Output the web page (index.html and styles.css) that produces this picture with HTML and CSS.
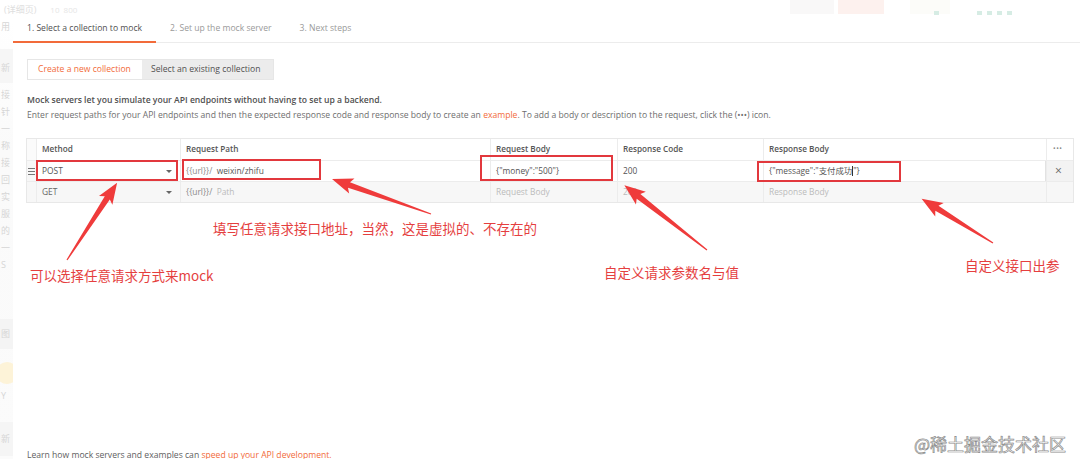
FILE: index.html
```html
<!DOCTYPE html>
<html lang="zh-CN">
<head>
<meta charset="utf-8">
<title>Mock server</title>
<link rel="stylesheet" href="styles.css">
</head>
<body>
<div class="page">
  <div class="top">
    <div class="top-left"><span class="faint">(详细页)</span><span class="faint small">10 &nbsp;800</span></div>
    <div class="top-right">
      <span class="tb gray"></span><span class="tb pink"></span><span class="tb pale"></span>
      <span class="gicon"></span>
      <span class="gicons"><i></i><i></i><i></i><i></i></span>
    </div>
  </div>
  <div class="layout">
    <aside class="side">
      <span class="s1">用</span>
      <span class="sbox">新</span>
      <span>接</span>
      <span>针</span>
      <span>一</span>
      <span>称</span>
      <span>接</span>
      <span>回</span>
      <span>实</span>
      <span>服</span>
      <span>的</span>
      <span>一</span>
      <span>S</span>
      <span class="sbox2">图</span>
      <span class="face"></span>
      <span>Y</span>
      <span class="sbox3">新</span>
    </aside>
    <main class="main">
      <nav class="tabs">
        <span class="tab active">1. Select a collection to mock</span>
        <span class="tab">2. Set up the mock server</span>
        <span class="tab">3. Next steps</span>
      </nav>
      <div class="content">
        <div class="toggle">
          <span class="tbtn sel">Create a new collection</span>
          <span class="tbtn">Select an existing collection</span>
        </div>
        <p class="lead">Mock servers let you simulate your API endpoints without having to set up a backend.</p>
        <p class="desc">Enter request paths for your API endpoints and then the expected response code and response body to create an <span class="link">example</span>. To add a body or description to the request, click the (•••) icon.</p>
        <div class="table">
          <div class="row head">
            <div class="c drag"></div>
            <div class="c">Method</div>
            <div class="c">Request Path</div>
            <div class="c">Request Body</div>
            <div class="c">Response Code</div>
            <div class="c">Response Body</div>
            <div class="c dots">•••</div>
          </div>
          <div class="row r1">
            <div class="c drag"><span class="handle"><i></i><i></i><i></i></span></div>
            <div class="c sel-cell">POST<span class="caret"></span></div>
            <div class="c"><span class="var">{{url}}/</span>&nbsp; weixin/zhifu</div>
            <div class="c">{"money":"500"}</div>
            <div class="c">200</div>
            <div class="c input">{"message":"支付成功<span class="cursor"></span>"}</div>
            <div class="c close">×</div>
          </div>
          <div class="row r2">
            <div class="c drag"></div>
            <div class="c sel-cell">GET<span class="caret"></span></div>
            <div class="c"><span class="var">{{url}}/</span>&nbsp; <span class="ph">Path</span></div>
            <div class="c ph">Request Body</div>
            <div class="c ph">200</div>
            <div class="c ph">Response Body</div>
            <div class="c"></div>
          </div>
        </div>
        <p class="learn">Learn how mock servers and examples can <span class="link">speed up your API development.</span></p>
      </div>
    </main>
  </div>

  <svg class="marks" width="1080" height="459" viewBox="0 0 1080 459" aria-hidden="true">
    <g fill="none" stroke="#e2383d" stroke-width="2">
      <rect x="37" y="161" width="140" height="19"/>
      <rect x="183" y="160" width="137" height="19"/>
      <rect x="481" y="156" width="131" height="24"/>
      <rect x="758" y="162" width="142" height="19"/>
    </g>
    <g fill="#ef3b3b">
      <polygon transform="translate(67,260) rotate(-57)" points="0,-0.6 74,-3 71,-8 92,0 71,8 74,3 0,0.6"/>
      <polygon transform="translate(431,214) rotate(-160.5)" points="0,-0.6 87,-3 84,-8 105,0 84,8 87,3 0,0.6"/>
      <polygon transform="translate(707,250) rotate(-141.9)" points="0,-0.6 87,-3 84,-8 105,0 84,8 87,3 0,0.6"/>
      <polygon transform="translate(993,243) rotate(-148.2)" points="0,-0.6 66,-3 63,-8 84,0 63,8 66,3 0,0.6"/>
    </g>
  </svg>
  <div class="note n1">可以选择任意请求方式来mock</div>
  <div class="note n2">填写任意请求接口地址，当然，这是虚拟的、不存在的</div>
  <div class="note n3">自定义请求参数名与值</div>
  <div class="note n4">自定义接口出参</div>
  <div class="wm">@稀土掘金技术社区</div>
</div>
</body>
</html>
```
FILE: styles.css
```css
* { box-sizing: border-box; }
html, body { margin: 0; padding: 0; }
body {
  width: 1080px;
  height: 459px;
  overflow: hidden;
  background: #fff;
  font-family: "Open Sans", "Noto Sans CJK SC", sans-serif;
  color: #505050;
}
.page { position: relative; width: 1080px; height: 459px; overflow: hidden; }

/* faded background header */
.top { height: 20px; display: flex; justify-content: space-between; align-items: flex-start; }
.top-left { display: flex; gap: 14px; padding: 5px 0 0 4px; }
.faint { font-size: 9px; color: #dedede; line-height: 10px; }
.faint.small { font-size: 8px; color: #e6e6e6; }
.top-right { display: flex; align-items: flex-start; width: 290px; padding-right: 50px; }
.tb { display: block; height: 14px; }
.tb.gray { width: 44px; background: #f9f8f8; }
.tb.pink { width: 46px; background: #fdf1ee; margin-left: 4px; }
.tb.pale { width: 40px; background: #fcfcf9; margin-left: 26px; }
.gicon { width: 5px; height: 4px; background: #d6ece4; margin: 11px 0 0 -16px; }
.gicons { display: flex; gap: 5px; margin: 11px 0 0 38px; }
.gicons i { display: block; width: 5px; height: 4px; background: #d6ece4; }

.layout { display: flex; }
.side {
  width: 13px;
  flex: none;
  overflow: hidden;
  display: flex;
  flex-direction: column;
  font-size: 9px;
  line-height: 10px;
  color: #d6d6d6;
  white-space: nowrap;
  gap: 7px;
  padding-top: 2px;
  background: linear-gradient(#fff, #fafafa 30%, #fbfbfb);
}
.side span { display: block; padding-left: 1px; }
.side .sbox { background: #f6f6f6; padding: 14px 0 10px 1px; margin-top: 10px; }
.side .sbox2 { background: #f4f4f4; padding: 10px 0 10px 1px; margin-top: 42px; }
.side .face { width: 22px; height: 22px; border-radius: 50%; background: #fdf3d8; margin: 6px 0 0 -4px; }
.side .sbox3 { background: #f5f5f5; padding: 12px 0 12px 1px; margin-top: 14px; }

.main { flex: 1; min-width: 0; display: flex; flex-direction: column; }

.tabs {
  display: flex;
  height: 23px;
  border-bottom: 1px solid #ececec;
  font-size: 8.6px;
}
.tab { padding: 1px 14px 0; color: #9a9a9a; line-height: 14px; }
.tab.active { color: #505050; border-bottom: 2px solid #f26b3a; height: 23px; }

.content { padding: 16px 0 0 14px; display: flex; flex-direction: column; align-items: flex-start; }

.toggle { display: flex; height: 21px; border: 1px solid #e6e6e6; background: #ececec; }
.tbtn { padding: 0 10px 0 9px; line-height: 19px; font-size: 8.6px; color: #505050; width: 131px; }
.tbtn.sel { background: #fff; color: #f26b3a; padding: 0 10px; width: 114px; }

.lead { margin: 14px 0 0; font-size: 8.6px; font-weight: 600; line-height: 12px; color: #505050; }
.desc { margin: 3px 0 0; font-size: 8.6px; line-height: 12px; color: #6e6e6e; }
.link { color: #f26b3a; }

.table {
  margin: 17px 0 0 -1px;
  border: 1px solid #e8e8e8;
  background: #f7f7f7;
  width: 1048px;
}
.row {
  display: grid;
  grid-template-columns: 9px 144px 310px 127px 146px 283px 27px;
  height: 21px;
}
.row + .row { border-top: 1px solid #ececec; }
.row.head { background: #fff; font-weight: 600; color: #555; }
.c {
  border-left: 1px solid #ececec;
  font-size: 8.4px;
  line-height: 20px;
  padding-left: 5px;
  white-space: nowrap;
  overflow: hidden;
  position: relative;
}
.c.drag { border-left: none; padding: 0; }
.head .c { font-size: 8.2px; }
.head .c.drag { background: #fbfbfb; }
.c.dots { font-size: 7px; letter-spacing: 0.5px; color: #888; padding-left: 6px; font-weight: 400; }
.r1 .c { background: #fff; color: #555; }
.r1 .c.drag { background: #f7f7f7; }
.r1 .c.close { background: #f3f3f3; color: #666; font-size: 12px; padding-left: 8px; }
.r1 .c.input { border-right: 1px solid #e2e2e2; }
.r2 .c { color: #666; }
.r2 .ph, .r2 .c.ph { color: #bbbbbb; }
.handle { display: flex; flex-direction: column; gap: 2px; padding: 7px 0 0 1px; }
.handle i { display: block; width: 7px; height: 1px; background: #777; }
.sel-cell .caret {
  position: absolute;
  right: 8px;
  top: 9px;
  width: 0; height: 0;
  border-left: 3px solid transparent;
  border-right: 3px solid transparent;
  border-top: 3.5px solid #666;
}
.var { color: #8a8a8a; }
.cursor { display: inline-block; width: 1px; height: 10px; background: #333; vertical-align: -2px; }

.learn { margin: 246px 0 0; font-size: 8.6px; line-height: 12px; color: #606060; }

.marks { position: absolute; left: 0; top: 0; pointer-events: none; }

.note {
  position: absolute;
  font-family: "Noto Sans CJK SC", sans-serif;
  font-size: 13.5px;
  line-height: 18px;
  color: #e53f3f;
  white-space: nowrap;
}
.n1 { left: 30px; top: 266px; }
.n2 { left: 213px; top: 219px; }
.n3 { left: 604px; top: 263px; }
.n4 { left: 965px; top: 256px; }

.wm {
  position: absolute;
  left: 914px;
  top: 434px;
  font-family: "Noto Sans CJK SC", sans-serif;
  font-size: 17px;
  line-height: 20px;
  white-space: nowrap;
  color: #fff;
  -webkit-text-stroke: 0.7px #8c8c8c;
}
```
